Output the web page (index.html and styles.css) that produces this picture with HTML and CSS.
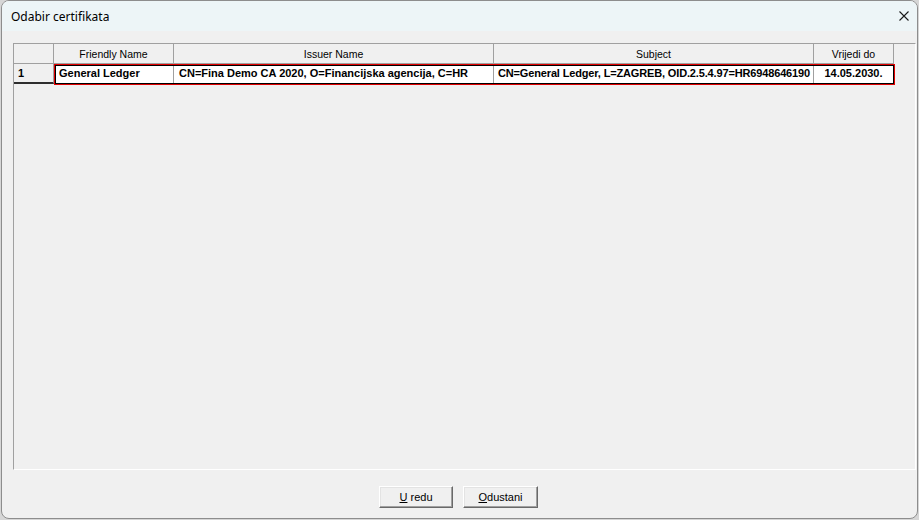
FILE: index.html
```html
<!DOCTYPE html>
<html>
	<head>
		<meta charset="UTF-8">
		<title>Odabir certifikata</title>
		<link rel="stylesheet" href="styles.css">
	</head>
	<body>
		<div class="window">
			<div class="titlebar">
				<span class="title">Odabir certifikata</span>
				<span class="close">
					<svg width="10" height="10" viewBox="0 0 10 10">
						<path d="M0.5 0.5 L9.5 9.5 M9.5 0.5 L0.5 9.5" stroke="#1a1a1a" stroke-width="1.1" fill="none"/>
					</svg>
				</span>
			</div>
			<div class="content">
				<div class="grid">
					<div class="row head">
						<div class="cell rh"></div>
						<div class="cell c1">Friendly Name</div>
						<div class="cell c2">Issuer Name</div>
						<div class="cell c3">Subject</div>
						<div class="cell c4">Vrijedi do</div>
					</div>
					<div class="row data">
						<div class="cell rh">1</div>
						<div class="sel">
							<div class="cell c1">General Ledger</div>
							<div class="cell c2">CN=Fina Demo CA 2020, O=Financijska agencija, C=HR</div>
							<div class="cell c3 tight">CN=General Ledger, L=ZAGREB, OID.2.5.4.97=HR6948646190</div>
							<div class="cell c4 center">14.05.2030.</div>
						</div>
					</div>
				</div>
				<div class="buttons">
					<button class="btn ok"><u>U</u> redu</button>
					<button class="btn"><u>O</u>dustani</button>
				</div>
			</div>
		</div>
	</body>
</html>
```

FILE: styles.css
```css
html, body{
	margin: 0;
	padding: 0;
}

body{
	width: 919px;
	height: 520px;
	background-color: #d6d6d6;
	overflow: hidden;
}

.window{
	box-sizing: border-box;
	width: 917px;
	height: 519px;
	margin-left: 1px;
	border: 1px solid #8d8d8d;
	border-radius: 8px;
	background-color: #f0f0f0;
	overflow: hidden;
}

.titlebar{
	height: 30px;
	background-color: #edf5f7;
	display: flex;
	align-items: center;
	justify-content: space-between;
	padding: 0 7px 0 9px;
}
.title{
	font-family: "Noto Sans", sans-serif;
	font-size: 12px;
	color: #000;
}
.close{
	display: flex;
	width: 10px;
	height: 10px;
	margin-right: 1px;
}

.content{
	padding: 12px 0 0 11px;
}

.grid{
	box-sizing: border-box;
	width: 903px;
	height: 427px;
	border-style: solid;
	border-width: 1px;
	border-color: #a0a0a0 #ffffff #ffffff #a0a0a0;
	font-family: "Liberation Sans", Arial, sans-serif;
	font-size: 10.5px;
	color: #000;
}

.row{
	display: flex;
	height: 20px;
}

.cell{
	box-sizing: border-box;
	height: 20px;
	line-height: 19px;
	border-right: 1px solid #a0a0a0;
	white-space: nowrap;
	overflow: hidden;
	flex: none;
}
.rh{ width: 40px; }
.c1{ width: 120px; }
.c2{ width: 320px; }
.c3{ width: 320px; }
.c4{ width: 80px; }

.head .cell{
	text-align: center;
	border-bottom: 1px solid #a0a0a0;
	line-height: 20px;
}

.data .rh{
	font-weight: bold;
	font-size: 11px;
	padding-left: 4px;
	border-bottom: 2px solid #2e2e2e;
	line-height: 19px;
}

.sel{
	display: flex;
	position: relative;
	background-color: #fff;
}
.sel:after{
	content: "";
	position: absolute;
	left: 0;
	top: 0;
	right: -1px;
	bottom: -1px;
	border: 1px solid #e00000;
	box-shadow: inset 0 0 0 1px #000;
}
.sel .cell{
	font-weight: bold;
	font-size: 11px;
	padding-left: 5px;
	line-height: 19px;
}
.sel .tight{
	letter-spacing: -0.15px;
	padding-left: 4px;
}
.sel .center{
	text-align: center;
	padding-left: 0;
}

.buttons{
	display: flex;
	justify-content: center;
	gap: 10px;
	padding-top: 16px;
	margin-left: -13px;
}
.btn{
	box-sizing: border-box;
	width: 75px;
	height: 22px;
	padding: 0;
	background-color: #f0f0f0;
	border: 1px solid;
	border-color: #fff #696969 #696969 #fff;
	box-shadow: inset -1px -1px #a0a0a0, inset 1px 1px #e3e3e3;
	font-family: "Liberation Sans", Arial, sans-serif;
	font-size: 11px;
	color: #000;
}
.btn.ok{
	width: 74px;
}
.btn u{
	text-decoration: underline;
}
```
